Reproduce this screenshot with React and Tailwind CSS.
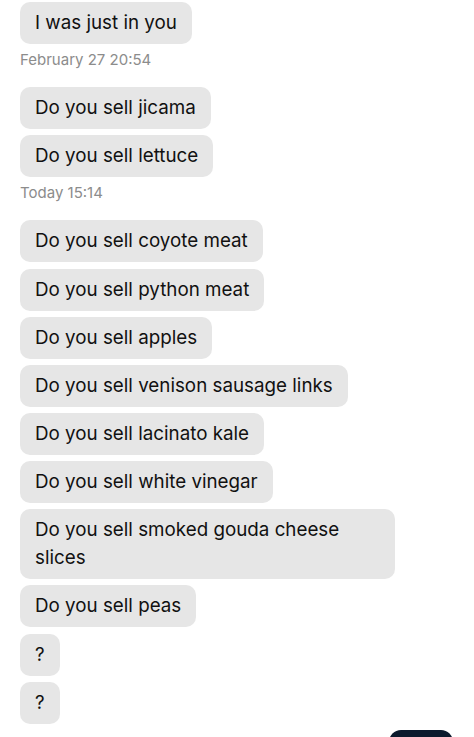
import React from 'react';

const items = [
  { type: 'msg', text: 'I was just in you' },
  { type: 'time', text: 'February 27 20:54' },
  { type: 'msg', text: 'Do you sell jicama' },
  { type: 'msg', text: 'Do you sell lettuce' },
  { type: 'time', text: 'Today 15:14' },
  { type: 'msg', text: 'Do you sell coyote meat' },
  { type: 'msg', text: 'Do you sell python meat' },
  { type: 'msg', text: 'Do you sell apples' },
  { type: 'msg', text: 'Do you sell venison sausage links' },
  { type: 'msg', text: 'Do you sell lacinato kale' },
  { type: 'msg', text: 'Do you sell white vinegar' },
  { type: 'msg', text: 'Do you sell smoked gouda cheese slices' },
  { type: 'msg', text: 'Do you sell peas' },
  { type: 'msg', text: '?' },
  { type: 'msg', text: '?' },
];

export default function App() {
  return (
    <div className="relative h-[737px] w-[474px] overflow-hidden bg-white" style={{ fontFamily: 'Inter, "Noto Sans", sans-serif' }}>
      <div className="flex flex-col items-start px-5 pt-[2px]">
        {items.map((it, i) =>
          it.type === 'time' ? (
            <div key={i} className="mb-[17px] h-[20px] text-[15px] leading-[20px] text-[#8c8c8c]">
              {it.text}
            </div>
          ) : (
            <div
              key={i}
              className="mb-[6.15px] max-w-[375px] rounded-[10px] bg-[#e6e6e6] px-[15px] py-[7px] text-[18.8px] leading-[28px] text-[#111]"
            >
              {it.text}
            </div>
          )
        )}
      </div>
      <div className="absolute left-[389px] top-[730px] h-[30px] w-[64px] rounded-[12px] bg-[#0b1a2d]" />
    </div>
  );
}
